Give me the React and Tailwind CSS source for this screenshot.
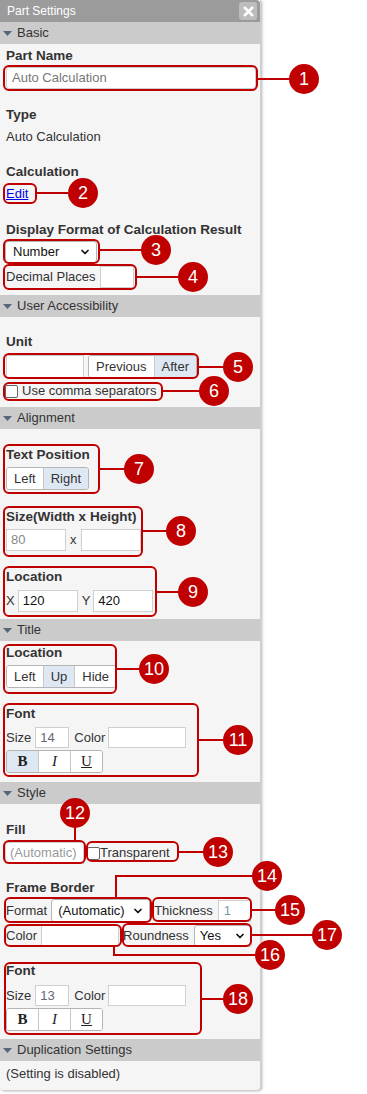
import React from 'react';
import { X, ChevronDown } from 'lucide-react';

const Label = ({ children, className = '' }) => (
    <div className={`h-[16px] leading-[16px] text-[13.5px] font-bold text-[#333] ${className}`}>{children}</div>
);

const Section = ({ title }) => (
    <div className="flex items-center h-[22px] bg-[#cbcbcb] text-[13px] text-[#333]">
        <svg width="9" height="5" viewBox="0 0 9 5" className="ml-[3px] mr-[5px]">
            <polygon points="0,0 9,0 4.5,5" fill="#56677a" />
        </svg>
        <span>{title}</span>
    </div>
);

const Seg = ({ items, active }) => (
    <div className="flex h-[23px] rounded-[3px] border border-[#b5b5b5] overflow-hidden">
        {items.map((it, i) => (
            <div
                key={it}
                className={`flex items-center px-[7px] text-[13px] text-[#333] ${i > 0 ? 'border-l border-[#c8c8c8]' : ''} ${i === active ? 'bg-[#dde8f3]' : 'bg-white'}`}
            >
                {it}
            </div>
        ))}
    </div>
);

const Biu = ({ active }) => (
    <div className="flex h-[23px] w-[97px] rounded-[3px] border border-[#b5b5b5] overflow-hidden font-['Liberation_Serif',serif] text-[15px] text-[#222]">
        <div className={`flex-1 flex items-center justify-center font-bold ${active ? 'bg-[#dde8f3]' : 'bg-white'}`}>B</div>
        <div className="flex-1 flex items-center justify-center italic bg-white border-l border-[#c8c8c8]">I</div>
        <div className="flex-1 flex items-center justify-center underline bg-white border-l border-[#c8c8c8]">U</div>
    </div>
);

const Box = ({ className = '', children }) => (
    <div className={`flex items-center bg-white border border-[#cfcfcf] text-[13px] ${className}`}>{children}</div>
);

const Select = ({ value, className = '' }) => (
    <div className={`flex items-center justify-between bg-white border border-[#b5b5b5] rounded-[3px] text-[13px] text-[#111] ${className}`}>
        <span>{value}</span>
        <ChevronDown size={12} strokeWidth={3.5} className="text-[#111]" />
    </div>
);

const Check = () => (
    <div className="w-[13px] h-[13px] rounded-[2px] border border-[#666] bg-white" />
);

const FontBlock = ({ size, bold }) => (
    <>
        <div className="flex items-center h-[21px] text-[13px] text-[#333]">
            <span>Size</span>
            <Box className="ml-[4px] w-[34px] h-[21px] pl-[4px] text-[#667]">{size}</Box>
            <span className="ml-[5px]">Color</span>
            <Box className="ml-[3px] w-[78px] h-[21px]" />
        </div>
        <div className="mt-[2px]">
            <Biu active={bold} />
        </div>
    </>
);

const boxes = [
    [3, 65, 258, 91], [3, 183, 37, 204], [3, 239, 100, 264], [3, 264, 137, 290],
    [3, 353, 199, 379], [3, 382, 163, 401], [3, 444, 100, 494], [3, 506, 143, 557],
    [3, 566, 157, 617], [3, 644, 117, 694], [3, 703, 199, 777], [3, 840, 86, 864],
    [86, 841, 179, 862], [4, 897, 152, 923], [152, 897, 252, 922], [4, 924, 122, 947],
    [122, 923, 252, 947], [4, 962, 202, 1035],
];

const lines = [
    '258,79 304,79', '37,193 83,193', '100,250 156,250', '137,277 193,277',
    '199,367 238,367', '163,391 214,391', '100,469 139,469', '143,531 181,531',
    '157,592 193,592', '117,669 154,669', '199,740 238,740', '75,813 75,840',
    '179,852 218,852', '116,897 116,876 267,876', '252,910 290,910',
    '114,947 114,955 270,955', '252,935 327,935', '202,999 238,999',
];

const dots = [
    [304, 79], [83, 193], [156, 250], [193, 277], [238, 367], [214, 391],
    [139, 469], [181, 531], [193, 592], [154, 669], [238, 740], [75, 813],
    [218, 852], [267, 876], [290, 910], [270, 955], [327, 935], [238, 999],
];

const Annotations = () => (
    <svg width="367" height="1094" className="absolute left-0 top-0 pointer-events-none">
        {lines.map((p, i) => (
            <polyline key={i} points={p} fill="none" stroke="#c00000" strokeWidth="2" />
        ))}
        {boxes.map(([x1, y1, x2, y2], i) => (
            <rect key={i} x={x1 + 1} y={y1 + 1} width={x2 - x1 - 2} height={y2 - y1 - 2} rx="5" fill="none" stroke="#c00000" strokeWidth="2" />
        ))}
        {dots.map(([cx, cy], i) => (
            <g key={i}>
                <circle cx={cx} cy={cy} r="15" fill="#c00000" />
                <text x={cx} y={cy + 6} textAnchor="middle" fill="#fff" fontSize="18" fontFamily="Liberation Sans, Arial, sans-serif">
                    {i + 1}
                </text>
            </g>
        ))}
    </svg>
);

export default function App() {
    return (
        <div className="relative w-[367px] h-[1094px] bg-white font-['Liberation_Sans',Arial,sans-serif]">
            <div className="w-[261px] bg-[#f5f5f5] border-r border-[#d0d0d0] rounded-b-[4px] shadow-[1px_1px_3px_rgba(0,0,0,0.3)] overflow-hidden">
                {/* title bar */}
                <div className="flex items-center justify-between h-[22px] bg-[#9b9b9b] rounded-tr-[4px] pl-[7px] pr-[3px]">
                    <span className="text-[12px] text-white">Part Settings</span>
                    <div className="flex items-center justify-center w-[18px] h-[18px] rounded-[3px] bg-[#bdbdbd]">
                        <X size={15} strokeWidth={4} className="text-white" />
                    </div>
                </div>

                <Section title="Basic" />
                <div className="px-[6px] pt-[4px] pb-[7px]">
                    <Label>Part Name</Label>
                    <Box className="mt-[3px] h-[22px] w-[250px] pl-[5px] text-[#777] rounded-[3px]">Auto Calculation</Box>
                    <Label className="mt-[18px]">Type</Label>
                    <div className="mt-[6px] h-[16px] leading-[16px] text-[13px] text-[#333]">Auto Calculation</div>
                    <Label className="mt-[19px]">Calculation</Label>
                    <div className="mt-[6px] h-[16px] leading-[16px] text-[13px] text-[#0000ee] underline">Edit</div>
                    <Label className="mt-[20px]">Display Format of Calculation Result</Label>
                    <Select value="Number" className="mt-[3px] -ml-[1px] w-[92px] h-[22px] pl-[7px] pr-[5px]" />
                    <div className="mt-[3px] flex items-center h-[22px] text-[13px] text-[#333]">
                        <span>Decimal Places</span>
                        <Box className="ml-[4px] w-[34px] h-[22px]" />
                    </div>
                </div>

                <Section title="User Accessibility" />
                <div className="px-[6px] pt-[17px] pb-[6px]">
                    <Label>Unit</Label>
                    <div className="mt-[5px] flex items-center">
                        <Box className="w-[78px] h-[23px]" />
                        <div className="ml-[4px]">
                            <Seg items={['Previous', 'After']} active={1} />
                        </div>
                    </div>
                    <div className="mt-[3px] flex items-center h-[20px] -ml-[1px] text-[13px] text-[#333]">
                        <Check />
                        <span className="ml-[4px]">Use comma separators</span>
                    </div>
                </div>

                <Section title="Alignment" />
                <div className="px-[6px] pt-[18px] pb-[7px]">
                    <Label>Text Position</Label>
                    <div className="mt-[4px] flex">
                        <Seg items={['Left', 'Right']} active={1} />
                    </div>
                    <Label className="mt-[19px]">Size(Width x Height)</Label>
                    <div className="mt-[4px] flex items-center text-[13px] text-[#333]">
                        <Box className="w-[60px] h-[22px] pl-[4px] text-[#888]">80</Box>
                        <span className="ml-[4px]">x</span>
                        <Box className="ml-[4px] w-[60px] h-[22px] bg-[#f0f0f0]" />
                    </div>
                    <Label className="mt-[18px]">Location</Label>
                    <div className="mt-[5px] flex items-center text-[13px] text-[#333]">
                        <span>X</span>
                        <Box className="ml-[3px] w-[60px] h-[22px] pl-[4px] text-[#111]">120</Box>
                        <span className="ml-[4px]">Y</span>
                        <Box className="ml-[3px] w-[60px] h-[22px] pl-[4px] text-[#111]">420</Box>
                    </div>
                </div>

                <Section title="Title" />
                <div className="px-[6px] pt-[4px] pb-[9px]">
                    <Label>Location</Label>
                    <div className="mt-[4px] flex">
                        <Seg items={['Left', 'Up', 'Hide']} active={1} />
                    </div>
                    <Label className="mt-[18px] mb-[5px]">Font</Label>
                    <FontBlock size="14" bold />
                </div>

                <Section title="Style" />
                <div className="px-[6px] pt-[18px] pb-[8px]">
                    <Label>Fill</Label>
                    <div className="mt-[4px] flex items-center text-[13px] text-[#333]">
                        <Box className="-ml-[1px] w-[79px] h-[22px] pl-[4px] text-[#999]">(Automatic)</Box>
                        <div className="ml-[3px]">
                            <Check />
                        </div>
                        <span>Transparent</span>
                    </div>
                    <Label className="mt-[16px]">Frame Border</Label>
                    <div className="mt-[3px] flex items-center text-[13px] text-[#333]">
                        <span>Format</span>
                        <Select value="(Automatic)" className="ml-[4px] w-[99px] h-[23px] pl-[6px] pr-[5px]" />
                        <span className="ml-[4px]">Thickness</span>
                        <Box className="ml-[5px] w-[33px] h-[22px] pl-[5px] text-[#79a]">1</Box>
                    </div>
                    <div className="mt-[3px] flex items-center text-[13px] text-[#333]">
                        <span>Color</span>
                        <Box className="ml-[4px] w-[78px] h-[22px]" />
                        <span className="ml-[4px]">Roundness</span>
                        <Select value="Yes" className="ml-[5px] w-[58px] h-[22px] pl-[5px] pr-[5px]" />
                    </div>
                    <Label className="mt-[16px] mb-[6px]">Font</Label>
                    <FontBlock size="13" />
                </div>

                <Section title="Duplication Settings" />
                <div className="px-[6px] pt-[5px] pb-[8px]">
                    <div className="h-[16px] leading-[16px] text-[13px] text-[#333]">(Setting is disabled)</div>
                </div>
            </div>
            <Annotations />
        </div>
    );
}
